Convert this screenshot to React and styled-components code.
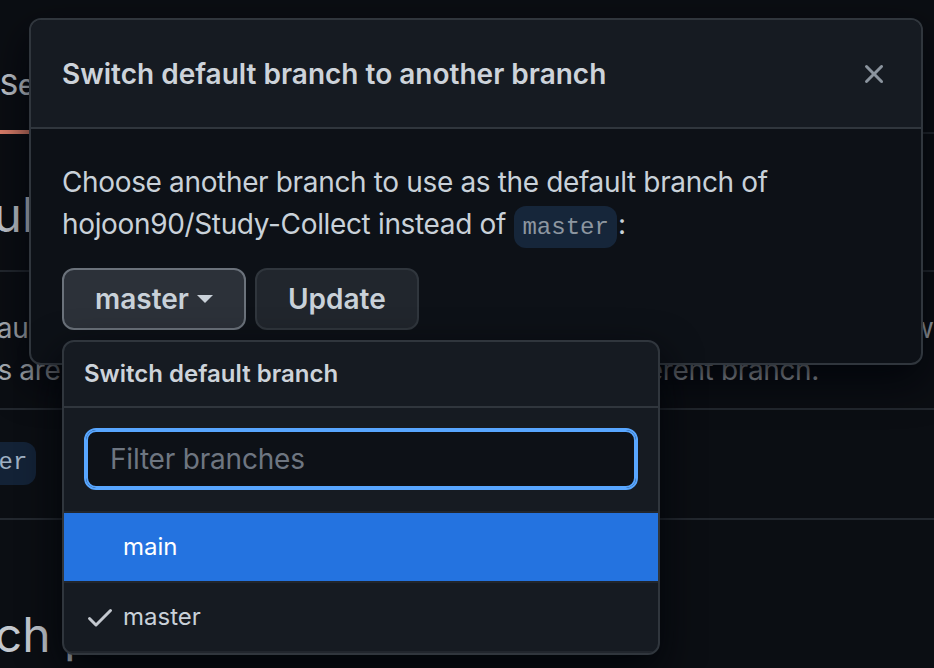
import React from "react";
import styled, { createGlobalStyle } from "styled-components";

const GlobalStyle = createGlobalStyle`
  html, body { margin: 0; padding: 0; background: #0b0e13; }
  body { font-family: Inter, "Noto Sans", sans-serif; overflow: hidden; }
  * { box-sizing: border-box; }
`;

const Screen = styled.div`
  position: relative;
  width: 934px;
  height: 668px;
  overflow: hidden;
  background: #0b0e13;
`;

/* ---------- background settings page ---------- */
const Page = styled.div`
  display: flex;
  flex-direction: column;
  white-space: nowrap;
  color: #b4b9c0;
`;

const TabNav = styled.nav`
  display: flex;
  align-items: flex-end;
  height: 134px;
  border-bottom: 2px solid #23282f;
`;

const Tab = styled.div`
  margin-left: ${(p) => p.$shift}px;
  margin-bottom: -2px;
  padding: 0 40px 24px 0;
  font-size: 28px;
  line-height: 42px;
  font-weight: 500;
  color: #c3c8cf;
  border-bottom: 4px solid #e0806b;
`;

const Subhead = styled.div`
  margin-top: 51px;
  padding-bottom: 25px;
  border-bottom: 2px solid #23282f;
`;

const Heading = styled.h2`
  margin: 0 0 0 ${(p) => p.$shift}px;
  font-size: 48px;
  line-height: 60px;
  font-weight: 400;
  color: #c3c8cf;
`;

const Para = styled.div`
  margin-top: 35px;
  padding-bottom: 17px;
  border-bottom: 2px solid #23282f;
`;

const ParaLine = styled.div`
  margin-left: ${(p) => p.$shift}px;
  font-size: 28px;
  line-height: 42px;
  letter-spacing: -0.35px;
  color: #a9aeb5;
`;

const BadgeRow = styled.div`
  padding: 32px 0 33px;
  border-bottom: 2px solid #23282f;
`;

const BranchBadge = styled.span`
  display: inline-block;
  margin-left: ${(p) => p.$shift}px;
  padding: 6px 9px 7px;
  border-radius: 12px;
  background: #132236;
  color: #9fb0c4;
  font-family: "Liberation Mono", "DejaVu Sans Mono", monospace;
  font-size: 24px;
  line-height: 30px;
`;

const LowerHeading = styled(Heading)`
  margin-top: 85px;
`;

/* ---------- dialog ---------- */
const Dialog = styled.div`
  position: absolute;
  left: 29px;
  top: 18px;
  width: 894px;
  border: 2px solid #30363d;
  border-radius: 12px;
  background: #0d1117;
  box-shadow: 0 16px 40px rgba(1, 4, 9, 0.85);
  color: #c9d1d9;
`;

const DialogHeader = styled.div`
  display: flex;
  align-items: center;
  justify-content: space-between;
  height: 109px;
  padding: 0 31px;
  background: #161b22;
  border-bottom: 2px solid #30363d;
  border-radius: 10px 10px 0 0;
`;

const DialogTitle = styled.h1`
  margin: 0;
  font-size: 28px;
  line-height: 42px;
  font-weight: 600;
  color: #cdd3da;
`;

const CloseButton = styled.button`
  display: flex;
  align-items: center;
  justify-content: center;
  width: 32px;
  height: 32px;
  padding: 0;
  border: 0;
  background: transparent;
  color: #8b949e;
`;

const DialogBody = styled.div`
  padding: 32px 31px 33px;
`;

const BodyText = styled.p`
  margin: 0;
  font-size: 28px;
  line-height: 42px;
  letter-spacing: -0.35px;
  color: #c9d1d9;
`;

const InlineCode = styled.code`
  margin: 0 1px;
  padding: 8px 8px 7px;
  border-radius: 12px;
  background: #16263a;
  color: #8d96a0;
  font-family: "Liberation Mono", "DejaVu Sans Mono", monospace;
  font-size: 24px;
  line-height: 1;
  letter-spacing: 0;
`;

const ButtonRow = styled.div`
  position: relative;
  display: flex;
  gap: 9px;
  margin-top: 23px;
`;

const Button = styled.button`
  display: inline-flex;
  align-items: center;
  gap: 8px;
  height: 62px;
  padding: 0 ${(p) => p.$pad}px;
  border-radius: 12px;
  border: 2px solid ${(p) => (p.$active ? "#6b727b" : "#30363d")};
  background: ${(p) => (p.$active ? "#2c3139" : "#21262d")};
  color: #c9d1d9;
  font-family: inherit;
  font-size: 28px;
  font-weight: 600;
`;

const Caret = styled.span`
  width: 0;
  height: 0;
  border-top: 8px solid #c9d1d9;
  border-left: 8px solid transparent;
  border-right: 8px solid transparent;
`;

/* ---------- dropdown menu ---------- */
const Menu = styled.div`
  position: absolute;
  left: 0;
  top: 72px;
  width: 598px;
  border: 2px solid #30363d;
  border-radius: 12px;
  background: #161b22;
  box-shadow: 0 16px 40px rgba(1, 4, 9, 0.9);
  overflow: hidden;
  z-index: 2;
`;

const MenuHeader = styled.div`
  padding: 14px 20px;
  border-bottom: 2px solid #30363d;
  font-size: 24px;
  line-height: 36px;
  font-weight: 600;
  color: #cdd3da;
`;

const FilterBox = styled.div`
  padding: 20px 20px 21px;
  border-bottom: 2px solid #21262d;
`;

const FilterInput = styled.input`
  display: block;
  width: 100%;
  height: 62px;
  padding: 0 24px;
  border: 2px solid #58a6ff;
  border-radius: 12px;
  background: #0d1117;
  box-shadow: inset 0 0 0 2px #58a6ff;
  outline: none;
  color: #c9d1d9;
  font-family: inherit;
  font-size: 28px;
  letter-spacing: -0.2px;
  &::placeholder { color: #6e7681; }
`;

const Item = styled.div`
  display: flex;
  align-items: center;
  gap: 7px;
  padding: 16px 20px 16px;
  border-bottom: 2px solid #21262d;
  background: ${(p) => (p.$selected ? "#2473e0" : "transparent")};
  color: ${(p) => (p.$selected ? "#ffffff" : "#c9d1d9")};
  font-size: 24px;
  line-height: 36px;
`;

const IconSlot = styled.span`
  display: flex;
  width: 32px;
  height: 32px;
  color: #c3c8cf;
`;

const XIcon = () => (
  <svg width="32" height="32" viewBox="0 0 16 16" fill="currentColor">
    <path d="M3.72 3.72a.75.75 0 0 1 1.06 0L8 6.94l3.22-3.22a.749.749 0 0 1 1.275.326.749.749 0 0 1-.215.734L9.06 8l3.22 3.22a.749.749 0 0 1-.326 1.275.749.749 0 0 1-.734-.215L8 9.06l-3.22 3.22a.751.751 0 0 1-1.042-.018.751.751 0 0 1-.018-1.042L6.94 8 3.72 4.78a.75.75 0 0 1 0-1.06Z" />
  </svg>
);

const CheckIcon = () => (
  <svg width="32" height="32" viewBox="0 0 16 16" fill="currentColor">
    <path d="M13.78 4.22a.75.75 0 0 1 0 1.06l-7.25 7.25a.75.75 0 0 1-1.06 0L2.22 9.28a.751.751 0 0 1 .018-1.042.751.751 0 0 1 1.042-.018L6 10.94l6.72-6.72a.75.75 0 0 1 1.06 0Z" />
  </svg>
);

export default function App() {
  return (
    <Screen>
      <GlobalStyle />
      <Page>
        <TabNav>
          <Tab $shift={0}>Settings</Tab>
        </TabNav>
        <Subhead>
          <Heading $shift={-113}>Default branch</Heading>
        </Subhead>
        <Para>
          <ParaLine $shift={-103}>
            The default branch is considered the “base” branch in your repository, against which all pull requests and code
          </ParaLine>
          <ParaLine $shift={-98}>
            commits are automatically made, unless you specify a different branch.
          </ParaLine>
        </Para>
        <BadgeRow>
          <BranchBadge $shift={-68}>master</BranchBadge>
        </BadgeRow>
        <LowerHeading $shift={-110}>Branch protection rules</LowerHeading>
      </Page>

      <Dialog>
        <DialogHeader>
          <DialogTitle>Switch default branch to another branch</DialogTitle>
          <CloseButton aria-label="Close">
            <XIcon />
          </CloseButton>
        </DialogHeader>
        <DialogBody>
          <BodyText>
            Choose another branch to use as the default branch of
            <br />
            hojoon90/Study-Collect instead of <InlineCode>master</InlineCode>:
          </BodyText>
          <ButtonRow>
            <Button $active $pad={31}>
              master
              <Caret />
            </Button>
            <Button $pad={31}>Update</Button>
            <Menu>
              <MenuHeader>Switch default branch</MenuHeader>
              <FilterBox>
                <FilterInput placeholder="Filter branches" />
              </FilterBox>
              <Item $selected>
                <IconSlot />
                main
              </Item>
              <Item>
                <IconSlot>
                  <CheckIcon />
                </IconSlot>
                master
              </Item>
            </Menu>
          </ButtonRow>
        </DialogBody>
      </Dialog>
    </Screen>
  );
}
